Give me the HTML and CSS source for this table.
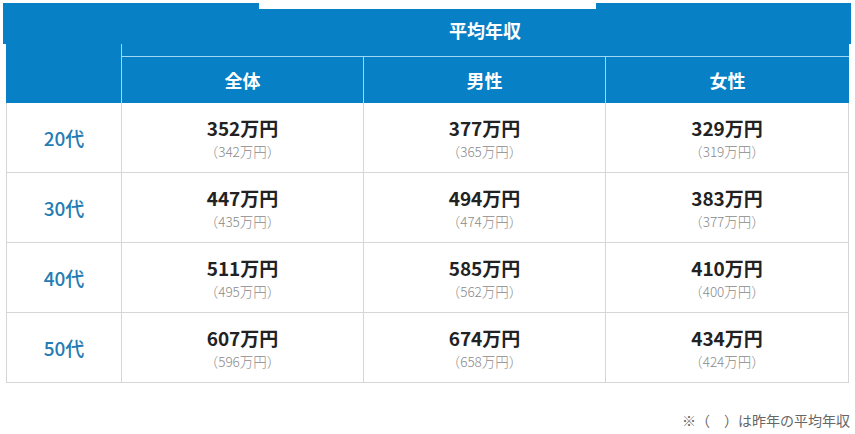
FILE: index.html
```html
<!DOCTYPE html>
<html lang="ja">
<head>
<meta charset="utf-8">
<title>平均年収</title>
<link rel="stylesheet" href="styles.css">
</head>
<body>
<div class="band">
  <div class="seg seg-left"></div>
  <div class="seg seg-mid"></div>
  <div class="seg seg-right"></div>
  <div class="band-title">平均年収</div>
</div>
<div class="grid">
  <div class="corner"></div>
  <div class="h-top"></div>
  <div class="h-col">全体</div>
  <div class="h-col">男性</div>
  <div class="h-col h-last">女性</div>

  <div class="age">20代</div>
  <div class="val"><span class="main">352万円</span><span class="sub">（342万円）</span></div>
  <div class="val"><span class="main">377万円</span><span class="sub">（365万円）</span></div>
  <div class="val last"><span class="main">329万円</span><span class="sub">（319万円）</span></div>

  <div class="age">30代</div>
  <div class="val"><span class="main">447万円</span><span class="sub">（435万円）</span></div>
  <div class="val"><span class="main">494万円</span><span class="sub">（474万円）</span></div>
  <div class="val last"><span class="main">383万円</span><span class="sub">（377万円）</span></div>

  <div class="age">40代</div>
  <div class="val"><span class="main">511万円</span><span class="sub">（495万円）</span></div>
  <div class="val"><span class="main">585万円</span><span class="sub">（562万円）</span></div>
  <div class="val last"><span class="main">410万円</span><span class="sub">（400万円）</span></div>

  <div class="age">50代</div>
  <div class="val"><span class="main">607万円</span><span class="sub">（596万円）</span></div>
  <div class="val"><span class="main">674万円</span><span class="sub">（658万円）</span></div>
  <div class="val last"><span class="main">434万円</span><span class="sub">（424万円）</span></div>
</div>
<p class="note">※（　）は昨年の平均年収</p>
</body>
</html>
```

FILE: styles.css
```css
* { box-sizing: border-box; }

body {
  margin: 0;
  background: #ffffff;
  font-family: "Noto Sans CJK JP", "Noto Sans", sans-serif;
  color: #222222;
}

.band {
  display: grid;
  grid-template-columns: 256px 337px 255px;
  grid-template-rows: 6px 35px;
  width: 848px;
  margin: 3px 0 0 3px;
}

.seg { background: #0780c5; }
.seg-left { grid-column: 1; grid-row: 1 / 3; }
.seg-mid { grid-column: 2; grid-row: 2; }
.seg-right { grid-column: 3; grid-row: 1 / 3; }

.band-title {
  grid-column: 1 / -1;
  grid-row: 1 / -1;
  align-self: end;
  padding-left: 116px;
  margin-bottom: 3px;
  text-align: center;
  color: #ffffff;
  font-size: 18px;
  font-weight: 700;
  line-height: 22px;
}

.grid {
  display: grid;
  grid-template-columns: 115px 242px 242px 244px;
  margin-left: 6px;
  width: 843px;
}

.corner {
  grid-column: 1;
  grid-row: 1 / 3;
  background: #0780c5;
}

.h-top {
  grid-column: 2 / 5;
  grid-row: 1;
  height: 13px;
  background: #0780c5;
  border-left: 1px solid #9fd8f2;
  border-bottom: 1px solid #9fd8f2;
}

.h-col {
  height: 46px;
  display: flex;
  align-items: center;
  justify-content: center;
  background: #0780c5;
  border-left: 1px solid #9fd8f2;
  color: #ffffff;
  font-size: 18px;
  font-weight: 700;
}

.age,
.val {
  height: 70px;
  border-left: 1px solid #d6d6d6;
  border-bottom: 1px solid #d6d6d6;
  display: flex;
  flex-direction: column;
  align-items: center;
  justify-content: center;
}

.val.last { border-right: 1px solid #d6d6d6; }

.age {
  color: #237cb3;
  font-size: 19px;
  font-weight: 500;
}

.main {
  font-size: 19px;
  font-weight: 700;
  line-height: 24px;
  color: #222222;
}

.sub {
  margin-top: 3px;
  font-size: 13.5px;
  line-height: 17px;
  color: #8a8a8a;
  font-weight: 300;
}

.note {
  margin: 27px 0 0;
  padding-right: 5px;
  text-align: right;
  font-size: 14px;
  line-height: 20px;
  color: #666666;
}
```
